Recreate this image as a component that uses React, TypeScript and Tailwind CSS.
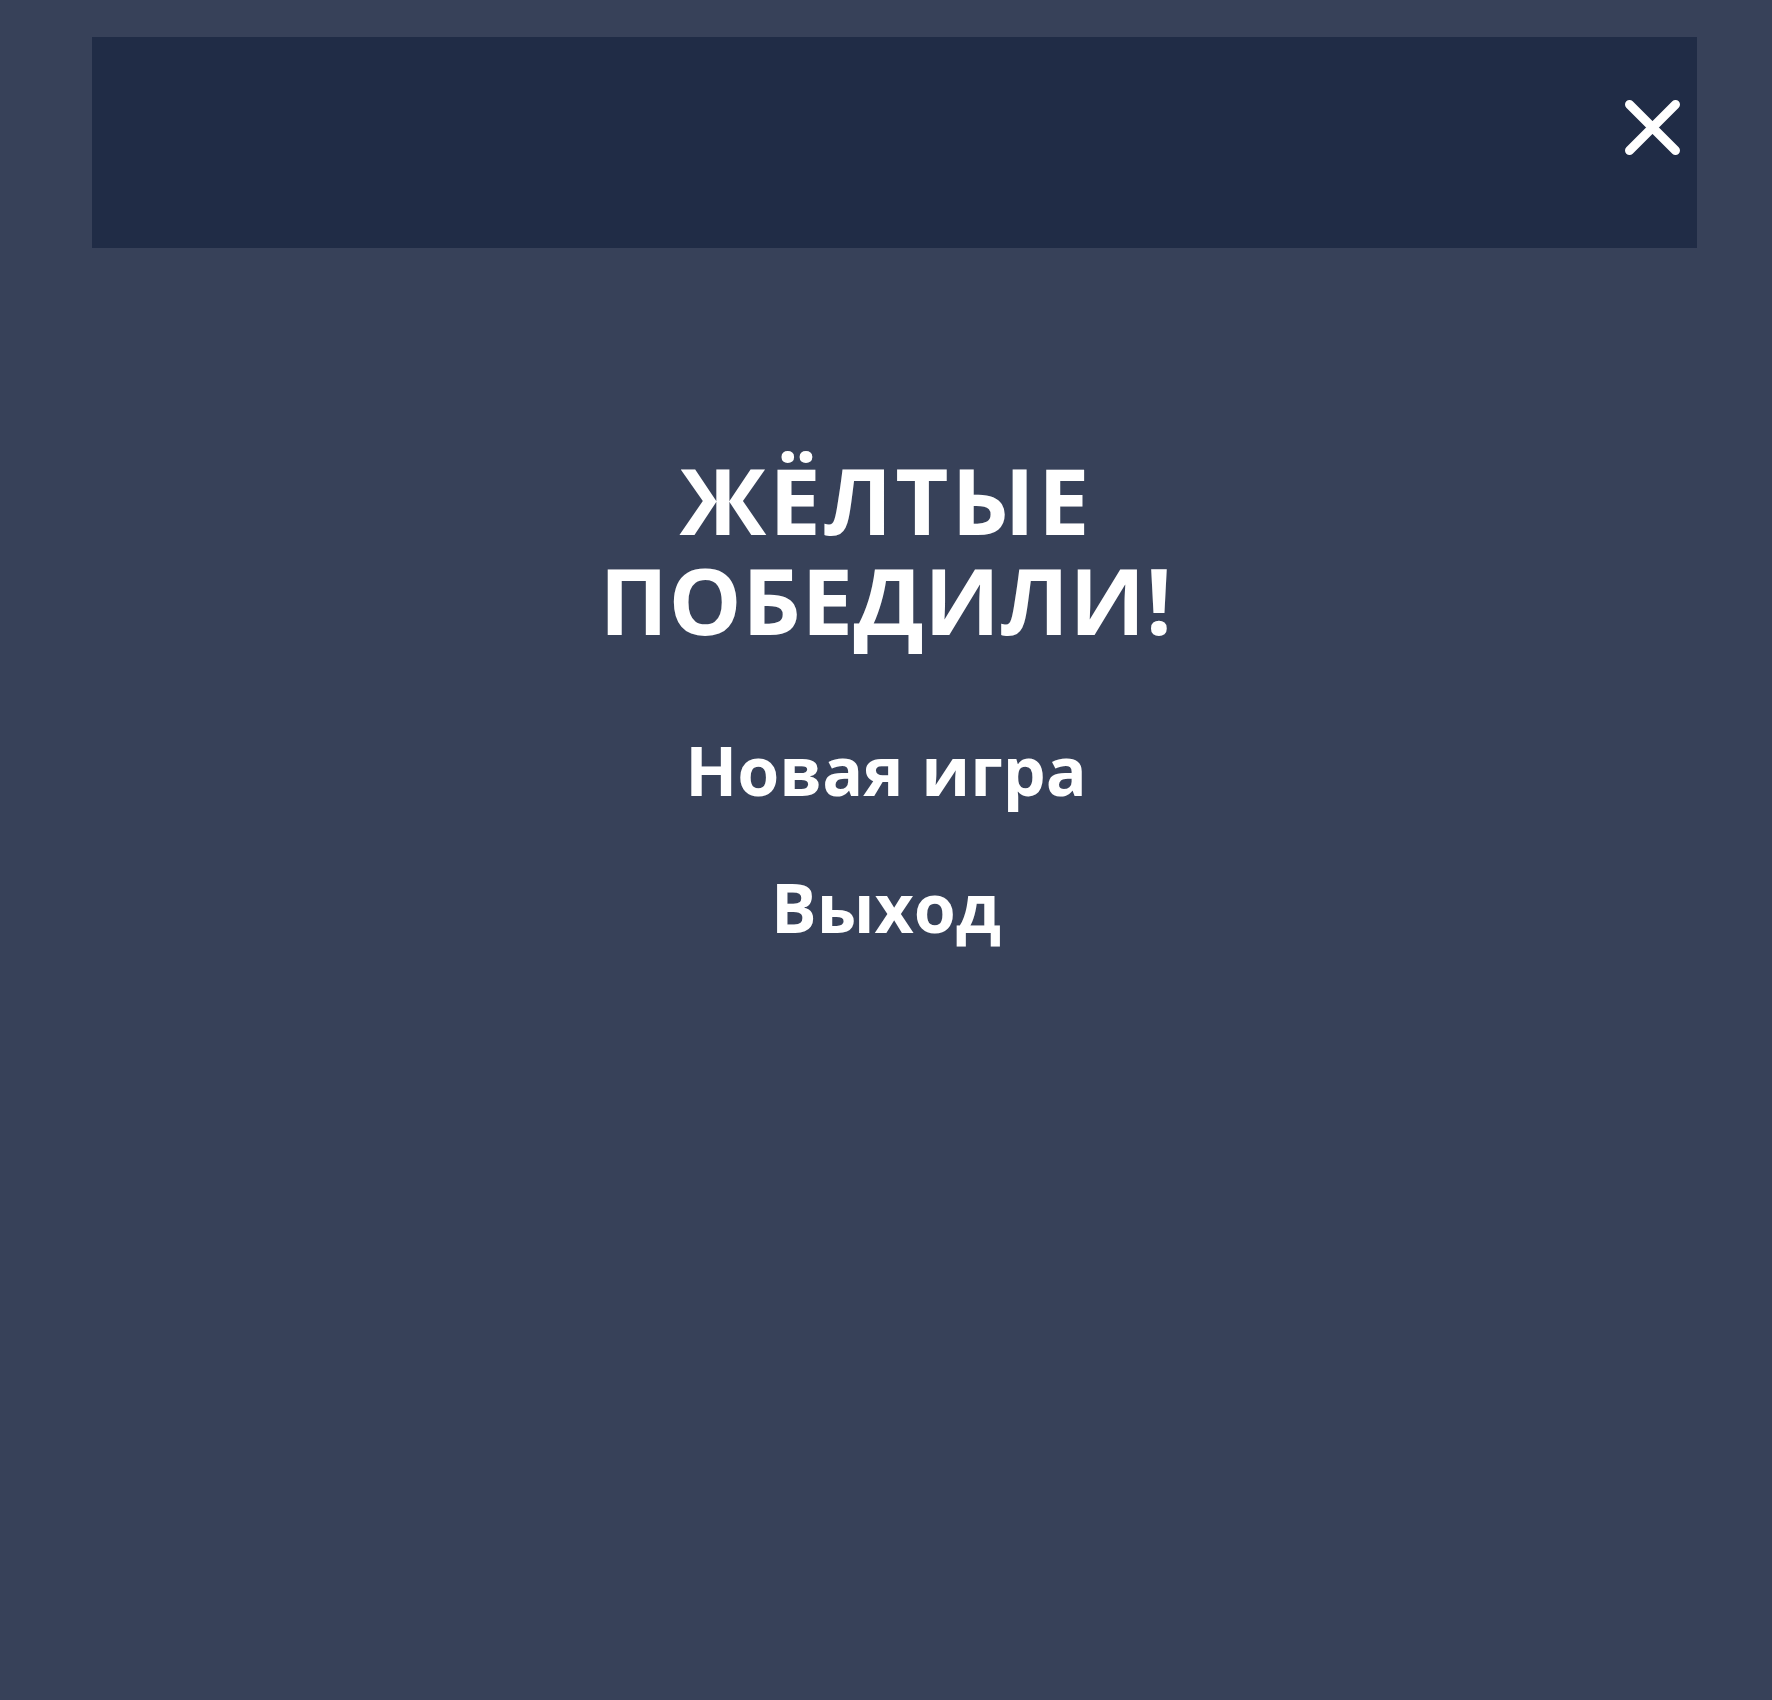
const CloseIcon = () => (
  <svg width="55" height="55" viewBox="0 0 55 55" fill="none">
    <path
      d="M4.5 4.5 L50.5 50.5 M50.5 4.5 L4.5 50.5"
      stroke="white"
      strokeWidth="9"
      strokeLinecap="round"
    />
  </svg>
);

const menuItems = ["Новая игра", "Выход"];

const App = () => {
  return (
    <div
      className="min-h-[1700px] w-full bg-[#374159] pt-[37px] text-white"
      style={{ fontFamily: '"Open Sans", "Noto Sans", sans-serif' }}
    >
      <header className="ml-[92px] flex h-[211px] w-[1605px] items-start justify-end bg-[#202c46] pr-[17px] pt-[63px]">
        <button aria-label="close" className="block">
          <CloseIcon />
        </button>
      </header>

      <main className="flex flex-col items-center pt-[202px]">
        <h1 className="text-center text-[92px] font-bold leading-[100px] tracking-[0.5px]">
          <span className="block tracking-[3px]">ЖЁЛТЫЕ</span>
          <span className="block">ПОБЕДИЛИ!</span>
        </h1>
        <div className="mt-[86px] flex flex-col items-center gap-[69px]">
          {menuItems.map((item) => (
            <button
              key={item}
              className="text-[68px] font-bold leading-[68px] text-white"
            >
              {item}
            </button>
          ))}
        </div>
      </main>
    </div>
  );
};

export default App;
